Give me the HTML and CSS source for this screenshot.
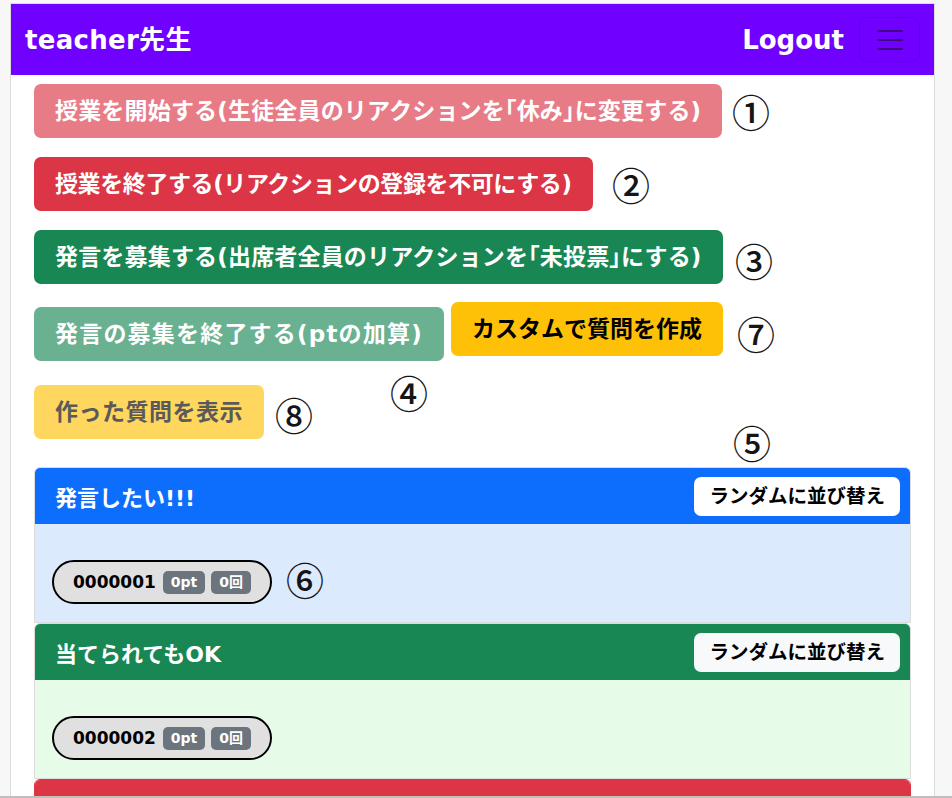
FILE: index.html
```html
<!DOCTYPE html>
<html lang="ja">
<head>
<meta charset="utf-8">
<title>teacher</title>
<link rel="stylesheet" href="styles.css">
</head>
<body>
<div class="frame">
  <nav class="navbar">
    <span class="brand">teacher先生</span>
    <div class="nav-right">
      <span class="logout">Logout</span>
      <span class="toggler"><span class="bar"></span><span class="bar"></span><span class="bar"></span></span>
    </div>
  </nav>
  <main class="content">
    <div class="row r1"><span class="btn btn-danger-off wide">授業を開始する(生徒全員のリアクションを「休み」に変更する)</span></div>
    <div class="row r2"><span class="btn btn-danger b2">授業を終了する(リアクションの登録を不可にする)</span></div>
    <div class="row r3"><span class="btn btn-success wide">発言を募集する(出席者全員のリアクションを「未投票」にする)</span></div>
    <div class="row r4">
      <span class="btn btn-success-off b4">発言の募集を終了する(ptの加算)</span>
      <span class="btn btn-warning b7">カスタムで質問を作成</span>
    </div>
    <div class="row r5"><span class="btn btn-warning-off b8">作った質問を表示</span></div>

    <section class="card card-blue">
      <header class="card-head"><h2 class="card-title">発言したい!!!</h2><span class="sort-btn">ランダムに並び替え</span></header>
      <div class="card-body"><span class="pill">0000001<span class="badge">0pt</span><span class="badge">0回</span></span></div>
    </section>
    <section class="card card-green">
      <header class="card-head"><h2 class="card-title">当てられてもOK</h2><span class="sort-btn">ランダムに並び替え</span></header>
      <div class="card-body"><span class="pill">0000002<span class="badge">0pt</span><span class="badge">0回</span></span></div>
    </section>
    <section class="card card-red">
      <header class="card-head"></header>
    </section>
  </main>
</div>
<div class="bottom-line"></div>

<span class="mark m1">①</span>
<span class="mark m2">②</span>
<span class="mark m3">③</span>
<span class="mark m7">⑦</span>
<span class="mark m4">④</span>
<span class="mark m8">⑧</span>
<span class="mark m5">⑤</span>
<span class="mark m6">⑥</span>
</body>
</html>
```
FILE: styles.css
```css
* { box-sizing: border-box; }
html, body { margin: 0; padding: 0; }
body {
  position: relative;
  width: 952px;
  height: 798px;
  overflow: hidden;
  background: #f7f7f7;
  font-family: "DejaVu Sans", "Noto Sans CJK JP", sans-serif;
}
.frame {
  position: relative;
  margin: 3px 0 0 10px;
  width: 925px;
  height: 793px;
  border: 1px solid #dcdcdc;
  border-bottom: none;
  background: #fff;
  overflow: hidden;
}
.bottom-line {
  height: 2px;
  background: #c2bebe;
}
.navbar {
  height: 71px;
  background: #7000ff;
  display: flex;
  align-items: center;
  justify-content: space-between;
  padding: 0 14px 0 14px;
}
.brand, .logout {
  color: #fff;
  font-weight: 700;
  font-size: 26px;
  line-height: 1;
}
.brand { letter-spacing: 0.3px; }
.nav-right { display: flex; align-items: center; gap: 15px; }
.toggler {
  width: 61px;
  height: 45px;
  border: 1px solid rgba(0,0,0,0.1);
  border-radius: 8px;
  display: flex;
  flex-direction: column;
  align-items: center;
  justify-content: center;
  gap: 7px;
}
.bar { display: block; width: 26px; height: 2px; background: #3d0a80; border-radius: 1px; }

.content { padding: 9px 23px 0 23px; }
.row { display: flex; align-items: flex-start; gap: 7px; }
.r2 { margin-top: 19px; }
.r3 { margin-top: 19px; }
.r4 { margin-top: 18px; }
.r5 { margin-top: 24px; }

.btn {
  display: inline-block;
  padding: 10px 20px;
  font-size: 23px;
  line-height: 32px;
  font-weight: 700;
  border: 1px solid transparent;
  border-radius: 7px;
  color: #fff;
  white-space: nowrap;
  font-feature-settings: "halt";
}
.wide { letter-spacing: 0.18px; }
.b2 { letter-spacing: -0.4px; }
.b4 { margin-top: 5px; letter-spacing: 1.2px; }
.b8 { letter-spacing: 0.5px; }
.btn-danger-off { background: #e87c86; }
.btn-danger { background: #dc3545; }
.btn-success { background: #198754; }
.btn-success-off { background: #69b190; }
.btn-warning { background: #ffc107; color: #000; }
.btn-warning-off { background: #ffd65e; color: #5a5a5a; }

.card {
  border: 1px solid #dcdcdc;
  border-radius: 6px 6px 0 0;
  overflow: hidden;
}
.card-blue { margin-top: 28px; }
.card-green { margin-top: 0; }
.card-red { height: 40px; border-color: #dc3545; }
.card-head {
  height: 56px;
  display: flex;
  align-items: center;
  justify-content: space-between;
  padding: 0 10px 0 20px;
}
.card-blue .card-head { background: #0d6efd; }
.card-green .card-head { background: #198754; }
.card-red .card-head { background: #dc3545; }
.card-title { margin: 0; color: #fff; font-size: 22px; font-weight: 700; }
.sort-btn {
  background: #f8f9fa;
  color: #000;
  font-weight: 700;
  font-size: 19.5px;
  line-height: 39px;
  padding: 0 15px;
  border-radius: 7px;
}
.card-blue .sort-btn { background: #fff; }
.card-body { padding: 36px 17px 17px; height: 98px; }
.card-blue .card-body { background: #dceafe; }
.card-green .card-body { background: #e6fbe8; }

.pill {
  display: inline-flex;
  align-items: center;
  height: 44px;
  padding: 0 19px 0 19px;
  border: 2px solid #000;
  border-radius: 22px;
  background: #e0e0e0;
  font-weight: 700;
  font-size: 17px;
  color: #000;
}
.badge {
  display: inline-block;
  margin-left: 6px;
  background: #6c757d;
  color: #fff;
  font-size: 14px;
  line-height: 23px;
  padding: 0 8px;
  border-radius: 5px;
}
.pill .badge:first-child { margin-left: 7px; }

.mark {
  position: absolute;
  width: 44px;
  height: 44px;
  line-height: 44px;
  text-align: center;
  font-size: 38px;
  font-weight: 500;
  color: #151515;
  font-family: "Noto Sans CJK JP", sans-serif;
  transform: translate(-50%, -50%);
}
.m1 { left: 751px; top: 111px; }
.m2 { left: 631px; top: 184px; }
.m3 { left: 754px; top: 260px; }
.m7 { left: 756px; top: 333px; }
.m4 { left: 409px; top: 392px; }
.m8 { left: 294px; top: 414px; }
.m5 { left: 752px; top: 442px; }
.m6 { left: 305px; top: 579px; }
```
